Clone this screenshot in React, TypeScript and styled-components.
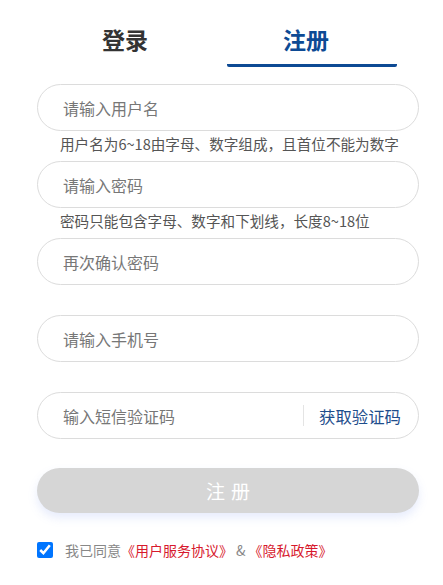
import {useState} from 'react';
import styled, {createGlobalStyle} from 'styled-components';

const GlobalStyle = createGlobalStyle`
  body {
    margin: 0;
    background: #fff;
    font-family: "Noto Sans CJK SC", "Noto Sans", sans-serif;
  }
  * { box-sizing: border-box; }
`;

const Page = styled.div`
  width: 443px;
  padding: 24px 24px 0 37px;
`;

const Tabs = styled.div`
  display: flex;
  gap: 17px;
  margin-left: 3px;
  height: 43px;
`;

const Tab = styled.div<{active?: boolean}>`
  width: 170px;
  height: 43px;
  text-align: center;
  font-size: 23px;
  line-height: 30px;
  font-weight: 700;
  color: ${(p) => (p.active ? '#0d4a94' : '#333')};
  border-bottom: 3px solid ${(p) => (p.active ? '#0d4a94' : 'transparent')};
  border-radius: 2px;
  padding-right: ${(p) => (p.active ? '12px' : '0')};
`;

const Form = styled.div`
  margin-top: 17px;
  width: 382px;
`;

const Field = styled.div`
  height: 77px;
`;

const InputBox = styled.div`
  height: 47px;
  border: 1px solid #dcdcdc;
  border-radius: 24px;
  display: flex;
  align-items: center;
  padding: 0 17px 0 23px;
`;

const Input = styled.input`
  flex: 1;
  min-width: 0;
  border: none;
  outline: none;
  background: transparent;
  font-family: inherit;
  font-size: 16px;
  color: #333;
  &::placeholder {
    color: #777;
  }
`;

const Divider = styled.span`
  width: 1px;
  height: 21px;
  background: #e4e4e4;
  margin-right: 15px;
`;

const CodeLink = styled.span`
  font-size: 16.4px;
  color: #1e4d8c;
  white-space: nowrap;
`;

const Hint = styled.div`
  padding-left: 23px;
  font-size: 14.6px;
  line-height: 25px;
  color: #555;
  white-space: nowrap;
`;

const Submit = styled.button`
  display: block;
  width: 382px;
  height: 45px;
  margin-top: -1px;
  border: none;
  border-radius: 23px;
  background: #d6d6d6;
  color: #fff;
  font-family: inherit;
  font-size: 19px;
  letter-spacing: 6px;
  text-indent: 6px;
  box-shadow: 0 5px 10px rgba(120, 150, 240, 0.18);
`;

const Agree = styled.label`
  display: flex;
  align-items: center;
  margin-top: 27px;
  font-size: 14px;
  color: #888;
`;

const Check = styled.input`
  width: 16px;
  height: 16px;
  margin: 0 12px 0 0;
`;

const Red = styled.span`
  color: #d7192d;
`;

const Amp = styled.span`
  margin: 0 3px;
`;

const fields = [
  {placeholder: '请输入用户名', hint: '用户名为6~18由字母、数字组成，且首位不能为数字'},
  {placeholder: '请输入密码', hint: '密码只能包含字母、数字和下划线，长度8~18位'},
  {placeholder: '再次确认密码', hint: ''},
  {placeholder: '请输入手机号', hint: ''},
];

export default function App() {
  const [agree, setAgree] = useState(true);
  return (
    <Page>
      <GlobalStyle />
      <Tabs>
        <Tab>登录</Tab>
        <Tab active>注册</Tab>
      </Tabs>
      <Form>
        {fields.map((f) => (
          <Field key={f.placeholder}>
            <InputBox>
              <Input placeholder={f.placeholder} />
            </InputBox>
            {f.hint && <Hint>{f.hint}</Hint>}
          </Field>
        ))}
        <Field>
          <InputBox>
            <Input placeholder="输入短信验证码" />
            <Divider />
            <CodeLink>获取验证码</CodeLink>
          </InputBox>
        </Field>
        <Submit>注册</Submit>
        <Agree>
          <Check type="checkbox" checked={agree} onChange={() => setAgree(!agree)} />
          我已同意<Red>《用户服务协议》</Red>
          <Amp>&amp;</Amp>
          <Red>《隐私政策》</Red>
        </Agree>
      </Form>
    </Page>
  );
}
